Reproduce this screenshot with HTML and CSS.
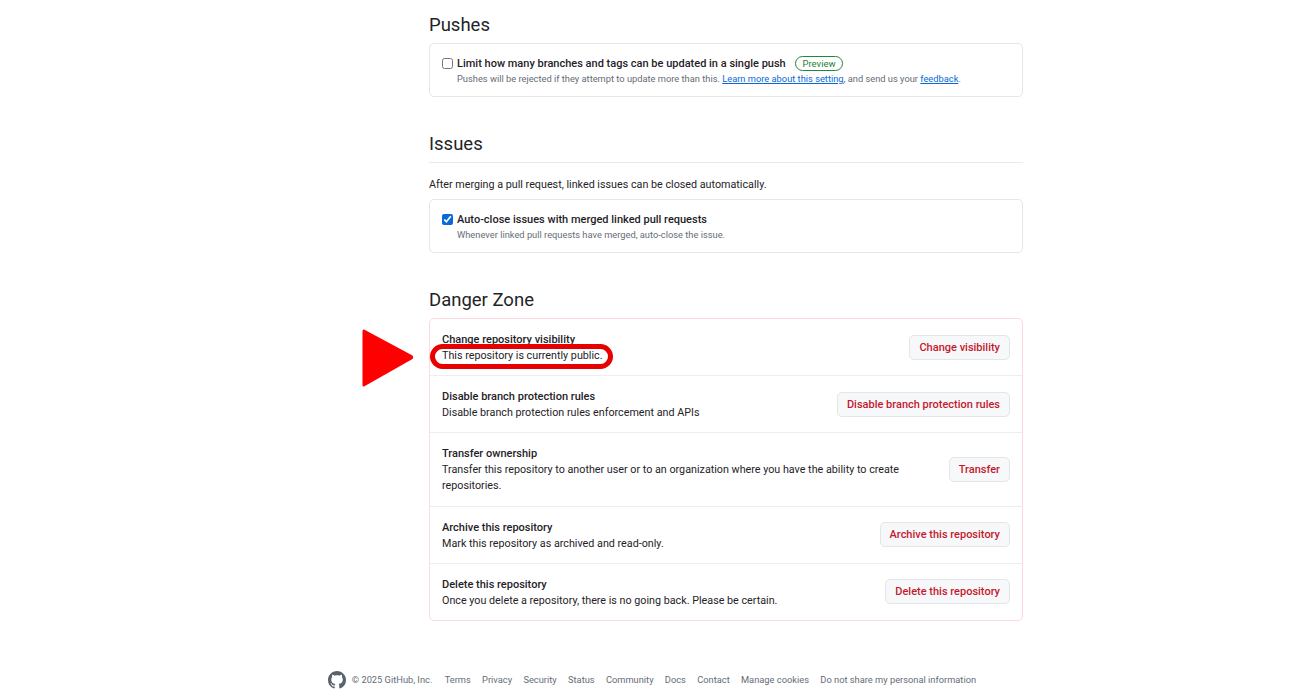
FILE: index.html
```html
<!DOCTYPE html>
<html lang="en">
<head>
    <meta charset="UTF-8">
    <meta name="viewport" content="width=device-width, initial-scale=1.0">
    <title>Repository settings</title>
    <link rel="stylesheet" href="styles.css">
</head>
<body>
    <main class="settings">
        <h2 class="section-title">Pushes</h2>
        <div class="box">
            <div class="check-row">
                <input type="checkbox" class="check">
                <div>
                    <div class="check-label">Limit how many branches and tags can be updated in a single push <span class="preview">Preview</span></div>
                    <p class="note">Pushes will be rejected if they attempt to update more than this. <a href="#">Learn more about this setting</a>, and send us your <a href="#">feedback</a>.</p>
                </div>
            </div>
        </div>

        <h2 class="section-title section-title-line">Issues</h2>
        <p class="intro">After merging a pull request, linked issues can be closed automatically.</p>
        <div class="box">
            <div class="check-row">
                <input type="checkbox" class="check" checked>
                <div>
                    <div class="check-label">Auto-close issues with merged linked pull requests</div>
                    <p class="note">Whenever linked pull requests have merged, auto-close the issue.</p>
                </div>
            </div>
        </div>

        <h2 class="section-title section-title-danger">Danger Zone</h2>
        <div class="danger-box">
            <div class="danger-row">
                <div class="danger-text">
                    <strong>Change repository visibility</strong>
                    <p>This repository is currently public.</p>
                </div>
                <button class="danger-btn">Change visibility</button>
            </div>
            <div class="danger-row">
                <div class="danger-text">
                    <strong>Disable branch protection rules</strong>
                    <p>Disable branch protection rules enforcement and APIs</p>
                </div>
                <button class="danger-btn">Disable branch protection rules</button>
            </div>
            <div class="danger-row danger-row-tall">
                <div class="danger-text">
                    <strong>Transfer ownership</strong>
                    <p>Transfer this repository to another user or to an organization where you have the ability to create repositories.</p>
                </div>
                <button class="danger-btn">Transfer</button>
            </div>
            <div class="danger-row">
                <div class="danger-text">
                    <strong>Archive this repository</strong>
                    <p>Mark this repository as archived and read-only.</p>
                </div>
                <button class="danger-btn">Archive this repository</button>
            </div>
            <div class="danger-row">
                <div class="danger-text">
                    <strong>Delete this repository</strong>
                    <p>Once you delete a repository, there is no going back. Please be certain.</p>
                </div>
                <button class="danger-btn">Delete this repository</button>
            </div>
        </div>
    </main>

    <footer class="footer">
        <svg class="footer-logo" viewBox="0 0 16 16" width="18" height="18" aria-hidden="true">
            <path fill="#59636e" d="M8 0c4.42 0 8 3.58 8 8a8.013 8.013 0 0 1-5.45 7.59c-.4.08-.55-.17-.55-.38 0-.27.01-1.13.01-2.2 0-.75-.25-1.23-.54-1.48 1.78-.2 3.65-.88 3.65-3.95 0-.88-.31-1.59-.82-2.15.08-.2.36-1.02-.08-2.12 0 0-.67-.22-2.2.82-.64-.18-1.32-.27-2-.27-.68 0-1.36.09-2 .27-1.53-1.03-2.2-.82-2.2-.82-.44 1.1-.16 1.92-.08 2.12-.51.56-.82 1.28-.82 2.15 0 3.06 1.86 3.75 3.64 3.95-.23.2-.44.55-.51 1.07-.46.21-1.61.55-2.33-.66-.15-.24-.6-.83-1.23-.82-.67.01-.27.38.01.53.34.19.73.9.82 1.13.16.45.68 1.31 2.69.94 0 .67.01 1.3.01 1.49 0 .21-.15.45-.55.38A7.995 7.995 0 0 1 0 8c0-4.42 3.58-8 8-8Z"></path>
        </svg>
        <span class="copyright">© 2025 GitHub, Inc.</span>
        <a href="#">Terms</a>
        <a href="#">Privacy</a>
        <a href="#">Security</a>
        <a href="#">Status</a>
        <a href="#">Community</a>
        <a href="#">Docs</a>
        <a href="#">Contact</a>
        <a href="#">Manage cookies</a>
        <a href="#">Do not share my personal information</a>
    </footer>

    <!-- annotation drawn over the screenshot -->
    <svg class="mark-arrow" viewBox="0 0 52 60" width="52" height="60" aria-hidden="true">
        <path fill="#ff0000" d="M2 1.5 L50.5 27.5 Q52 29.5 50.5 31 L2 58.5 Q0.5 59 0.5 57 L0.5 3 Q0.5 1 2 1.5 Z"></path>
    </svg>
    <div class="mark-ring"></div>
</body>
</html>
```

FILE: styles.css
```css
* {
    box-sizing: border-box;
}
body {
    position: relative;
    margin: 0;
    height: 698px;
    overflow: hidden;
    background-color: #ffffff;
    color: #1f2328;
    font-family: Roboto, "Noto Sans", Arial, sans-serif;
}
.settings {
    width: 594px;
    margin-left: 429px;
    padding-top: 13px;
}
.section-title {
    margin: 0;
    font-size: 18.5px;
    font-weight: 400;
    line-height: 24px;
}
.section-title-line {
    margin-top: 35px;
    padding-bottom: 6px;
    border-bottom: 1px solid #e8eaed;
}
.section-title-danger {
    margin-top: 35px;
}
.box {
    height: 54px;
    margin-top: 6px;
    padding: 12px 12px;
    border: 1px solid #e4e7ea;
    border-radius: 5px;
}
.intro {
    margin: 14px 0 6px;
    font-size: 10.75px;
    line-height: 16px;
}
.intro + .box {
    margin-top: 0;
}
.check-row {
    display: flex;
    gap: 4px;
}
.check {
    width: 11px;
    height: 11px;
    margin: 2px 0 0;
    accent-color: #0969da;
}
.check-label {
    font-size: 11px;
    font-weight: 500;
    line-height: 16px;
}
.preview {
    display: inline-block;
    margin-left: 7px;
    padding: 0 6px;
    border: 1px solid #1f883d;
    border-radius: 10px;
    color: #1a7f37;
    font-size: 9.5px;
    font-weight: 400;
    line-height: 13px;
}
.note {
    margin: 0;
    color: #656d76;
    font-size: 9.3px;
    line-height: 14px;
}
.note a {
    color: #0969da;
    text-decoration: underline;
}
.danger-box {
    margin-top: 6px;
    border: 1px solid #ffd8de;
    border-radius: 5px;
}
.danger-row {
    display: flex;
    align-items: center;
    justify-content: space-between;
    height: 57px;
    padding: 0 12px;
    border-top: 1px solid #eceef1;
}
.danger-row:first-child {
    border-top: none;
    height: 56px;
}
.danger-row:last-child {
    height: 57.5px;
}
.danger-row-tall {
    height: 73.5px;
}
.danger-text {
    max-width: 480px;
    padding-top: 2px;
    font-size: 11px;
    line-height: 16px;
}
.danger-text strong {
    font-weight: 500;
}
.danger-text p {
    margin: 0;
    font-size: 10.75px;
}
.danger-btn {
    flex-shrink: 0;
    height: 25px;
    padding: 0 9px;
    border: 1px solid #e3e6e9;
    border-radius: 5px;
    background-color: #f6f8fa;
    color: #c5182d;
    font-family: inherit;
    font-size: 11px;
    font-weight: 500;
}
.footer {
    display: flex;
    align-items: center;
    gap: 11.3px;
    position: absolute;
    left: 328px;
    top: 671px;
    color: #656d76;
    font-size: 9.3px;
    line-height: 18px;
}
.footer a {
    color: #656d76;
    text-decoration: none;
}
.footer-logo {
    margin-right: -5.5px;
}
.copyright {
    margin-right: 1px;
}
.mark-arrow {
    position: absolute;
    left: 362px;
    top: 328px;
}
.mark-ring {
    position: absolute;
    left: 430px;
    top: 344px;
    width: 183px;
    height: 25px;
    border: 5px solid #e60000;
    border-radius: 13px;
}
```
